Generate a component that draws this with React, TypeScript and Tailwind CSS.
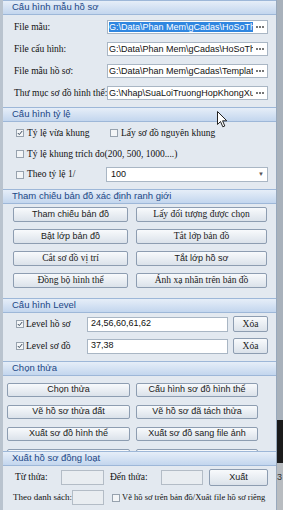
import React from "react";

const SANS = "font-['Liberation_Sans',Arial,sans-serif]";
const SERIF = "font-['Liberation_Serif','Times_New_Roman',serif]";

function Header({ title }: { title: string }) {
  return (
    <div
      className={`h-[15px] shrink-0 flex items-center pl-[9px] bg-linear-to-b from-[#e6eef8] to-[#c3d6ee] border-y border-[#9db7d8] text-[9.5px] text-[#1b4786] ${SANS}`}
    >
      {title}
    </div>
  );
}

function Check({ checked }: { checked?: boolean }) {
  return (
    <span className="w-[8px] h-[8px] border border-[#97a2ae] bg-[#f3f5f7] flex items-center justify-center shrink-0">
      {checked && (
        <svg width="6" height="6" viewBox="0 0 6 6">
          <path d="M0.8 3 L2.3 4.6 L5.2 1" stroke="#3a4a5c" strokeWidth="1" fill="none" />
        </svg>
      )}
    </span>
  );
}

function Btn({ label, serif }: { label: string; serif?: boolean }) {
  return (
    <div
      className={`h-full flex items-center justify-center rounded-[2px] border border-[#8d9db1] bg-linear-to-b from-[#f8fafc] to-[#dbe2ea] text-[#1a1a1a] whitespace-nowrap overflow-hidden ${
        serif ? `${SERIF} text-[9.5px]` : `${SANS} text-[9px]`
      }`}
    >
      {label}
    </div>
  );
}

const fileRows = [
  { label: "File mẫu:", value: "G:\\Data\\Phan Mem\\gCadas\\HoSoThua\\Mau", selected: true },
  { label: "File cấu hình:", value: "G:\\Data\\Phan Mem\\gCadas\\HoSoThua\\Config" },
  { label: "File mẫu hồ sơ:", value: "G:\\Data\\Phan Mem\\gCadas\\Template\\HoSo" },
  { label: "Thư mục sơ đồ hình thể:", value: "G:\\Nhap\\SuaLoiTruongHopKhongXuatHoSo" },
];

export default function App() {
  return (
    <div className={`w-[283px] h-[510px] flex overflow-hidden relative ${SANS}`}>
      <div className="w-[3px] shrink-0 bg-[#b9c3ce]" />
      <div className="flex-1 flex flex-col bg-[#e3e9f0] border-r border-[#97a8bc] overflow-hidden">
        {/* Section 1 */}
        <Header title="Cấu hình mẫu hồ sơ" />
        <div className="h-[92px] shrink-0 pt-[5px] flex flex-col gap-[8px] pl-[11px] pr-[8px]">
          {fileRows.map((r) => (
            <div key={r.label} className="h-[14px] flex items-center">
              <span className={`w-[93px] shrink-0 text-[9.5px] text-[#111] whitespace-nowrap ${SERIF}`}>{r.label}</span>
              <div className="flex-1 min-w-0 h-full bg-white border border-[#a9b6c4] flex items-center pl-[1px]">
                <div className="flex-1 min-w-0 overflow-hidden whitespace-nowrap text-[9px] leading-[12px] text-[#111]">
                  <span className={r.selected ? "bg-[#2f86e0] text-white" : ""}>{r.value}</span>
                </div>
                <div className="w-[14px] shrink-0 flex items-center justify-center gap-[1px] bg-white h-full">
                  <span className="w-[2px] h-[2px] bg-[#777]" />
                  <span className="w-[2px] h-[2px] bg-[#777]" />
                  <span className="w-[2px] h-[2px] bg-[#777]" />
                </div>
              </div>
            </div>
          ))}
        </div>

        {/* Section 2 */}
        <Header title="Cấu hình tỷ lệ" />
        <div className={`h-[67px] shrink-0 flex flex-col pl-[13px] pr-[8px] text-[9.5px] text-[#111] ${SERIF}`}>
          <div className="mt-[5px] h-[12px] flex items-center">
            <div className="w-[94px] flex items-center gap-[3px]">
              <Check checked />
              <span>Tỷ lệ vừa khung</span>
            </div>
            <div className="flex items-center gap-[3px]">
              <Check />
              <span>Lấy sơ đồ nguyên khung</span>
            </div>
          </div>
          <div className="mt-[9px] h-[12px] flex items-center gap-[3px]">
            <Check />
            <span>Tỷ lệ khung trích đo(200, 500, 1000....)</span>
          </div>
          <div className="mt-[7px] h-[15px] flex items-center">
            <div className="w-[90px] flex items-center gap-[3px]">
              <Check />
              <span>Theo tỷ lệ 1/</span>
            </div>
            <div className={`flex-1 h-full bg-white border border-[#a9b6c4] flex items-center pl-[4px] pr-[3px] text-[9px] ${SANS}`}>
              <span className="flex-1">100</span>
              <span className="text-[6px] text-[#555]">▼</span>
            </div>
          </div>
        </div>

        {/* Section 3 */}
        <Header title="Tham chiếu bản đồ xác định ranh giới" />
        <div className="h-[94px] shrink-0 pt-[3px] pl-[10px] grid grid-cols-[115px_131px] auto-rows-[15px] gap-x-[8px] gap-y-[7px]">
          <Btn label="Tham chiếu bản đồ" />
          <Btn label="Lấy đối tượng được chọn" serif />
          <Btn label="Bật lớp bản đồ" />
          <Btn label="Tắt lớp bản đồ" serif />
          <Btn label="Cắt sơ đồ vị trí" serif />
          <Btn label="Tắt lớp hồ sơ" />
          <Btn label="Đồng bộ hình thể" serif />
          <Btn label="Ánh xạ nhãn trên bản đồ" serif />
        </div>

        {/* Section 4 */}
        <Header title="Cấu hình Level" />
        <div className="h-[48px] shrink-0 pt-[3px] flex flex-col gap-[6px] pl-[13px] pr-[8px] text-[9px] text-[#111]">
          {[
            { label: "Level hồ sơ", value: "24,56,60,61,62" },
            { label: "Level sơ đồ", value: "37,38" },
          ].map((r) => (
            <div key={r.label} className="h-[16px] flex items-center">
              <div className={`w-[71px] flex items-center gap-[2px] ${SERIF} text-[9.5px]`}>
                <Check checked />
                <span>{r.label}</span>
              </div>
              <div className="w-[141px] h-[15px] bg-white border border-[#a9b6c4] flex items-center pl-[3px]">{r.value}</div>
              <div className="w-[35px] h-full ml-[5px]">
                <Btn label="Xóa" serif />
              </div>
            </div>
          ))}
        </div>

        {/* Section 5 */}
        <Header title="Chọn thửa" />
        <div className="h-[75px] shrink-0 overflow-hidden pt-[7px] pl-[4px] grid grid-cols-[123px_122px] auto-rows-[14px] gap-x-[6px] gap-y-[8px]">
          <Btn label="Chọn thửa" />
          <Btn label="Cấu hình sơ đồ hình thể" />
          <Btn label="Vẽ hồ sơ thửa đất" />
          <Btn label="Vẽ hồ sơ đã tách thửa" />
          <Btn label="Xuất sơ đồ hình thể" />
          <Btn label="Xuất sơ đồ sang file ảnh" />
          <Btn label="" />
          <Btn label="" />
        </div>

        {/* Section 6 */}
        <Header title="Xuất hồ sơ đồng loạt" />
        <div className={`flex-1 pt-[3px] flex flex-col gap-[4px] text-[9.5px] text-[#111] ${SERIF}`}>
          <div className="h-[17px] flex items-center pl-[12px]">
            <span className="w-[46px]">Từ thửa:</span>
            <div className="w-[43px] h-[15px] bg-[#e9edf1] border border-[#b3bcc6]" />
            <span className="w-[51px] ml-[6px]">Đến thửa:</span>
            <div className="w-[42px] h-[15px] bg-[#e9edf1] border border-[#b3bcc6]" />
            <div className="w-[59px] h-full ml-[6px]">
              <Btn label="Xuất" />
            </div>
          </div>
          <div className="h-[15px] flex items-center pl-[10px] whitespace-nowrap">
            <span className="w-[59px] text-[9px]">Theo danh sách:</span>
            <div className="w-[32px] h-[15px] bg-[#e9edf1] border border-[#b3bcc6] shrink-0" />
            <div className="ml-[8px] flex items-center gap-[2px]">
              <Check />
              <span className="text-[8.5px]">Vẽ hồ sơ trên bản đồ/Xuất file hồ sơ riêng</span>
            </div>
          </div>
        </div>
      </div>
      <div className="w-[6px] shrink-0 flex flex-col">
        <div className="h-[420px] bg-[#a8b1bb]" />
        <div className="h-[43px] bg-[#1b1b1b]" />
        <div className="flex-1 bg-[#b8bcc0] text-[9px] text-[#333] pt-[8px] overflow-hidden">3</div>
      </div>

      {/* mouse cursor */}
      <svg className="absolute left-[217px] top-[111px]" width="11" height="17" viewBox="0 0 11 17">
        <path d="M0.5 0.5 L0.5 13.5 L3.5 10.5 L5.8 15.8 L7.8 15 L5.6 9.8 L9.8 9.8 Z" fill="#fff" stroke="#222" strokeWidth="1" />
      </svg>
    </div>
  );
}
